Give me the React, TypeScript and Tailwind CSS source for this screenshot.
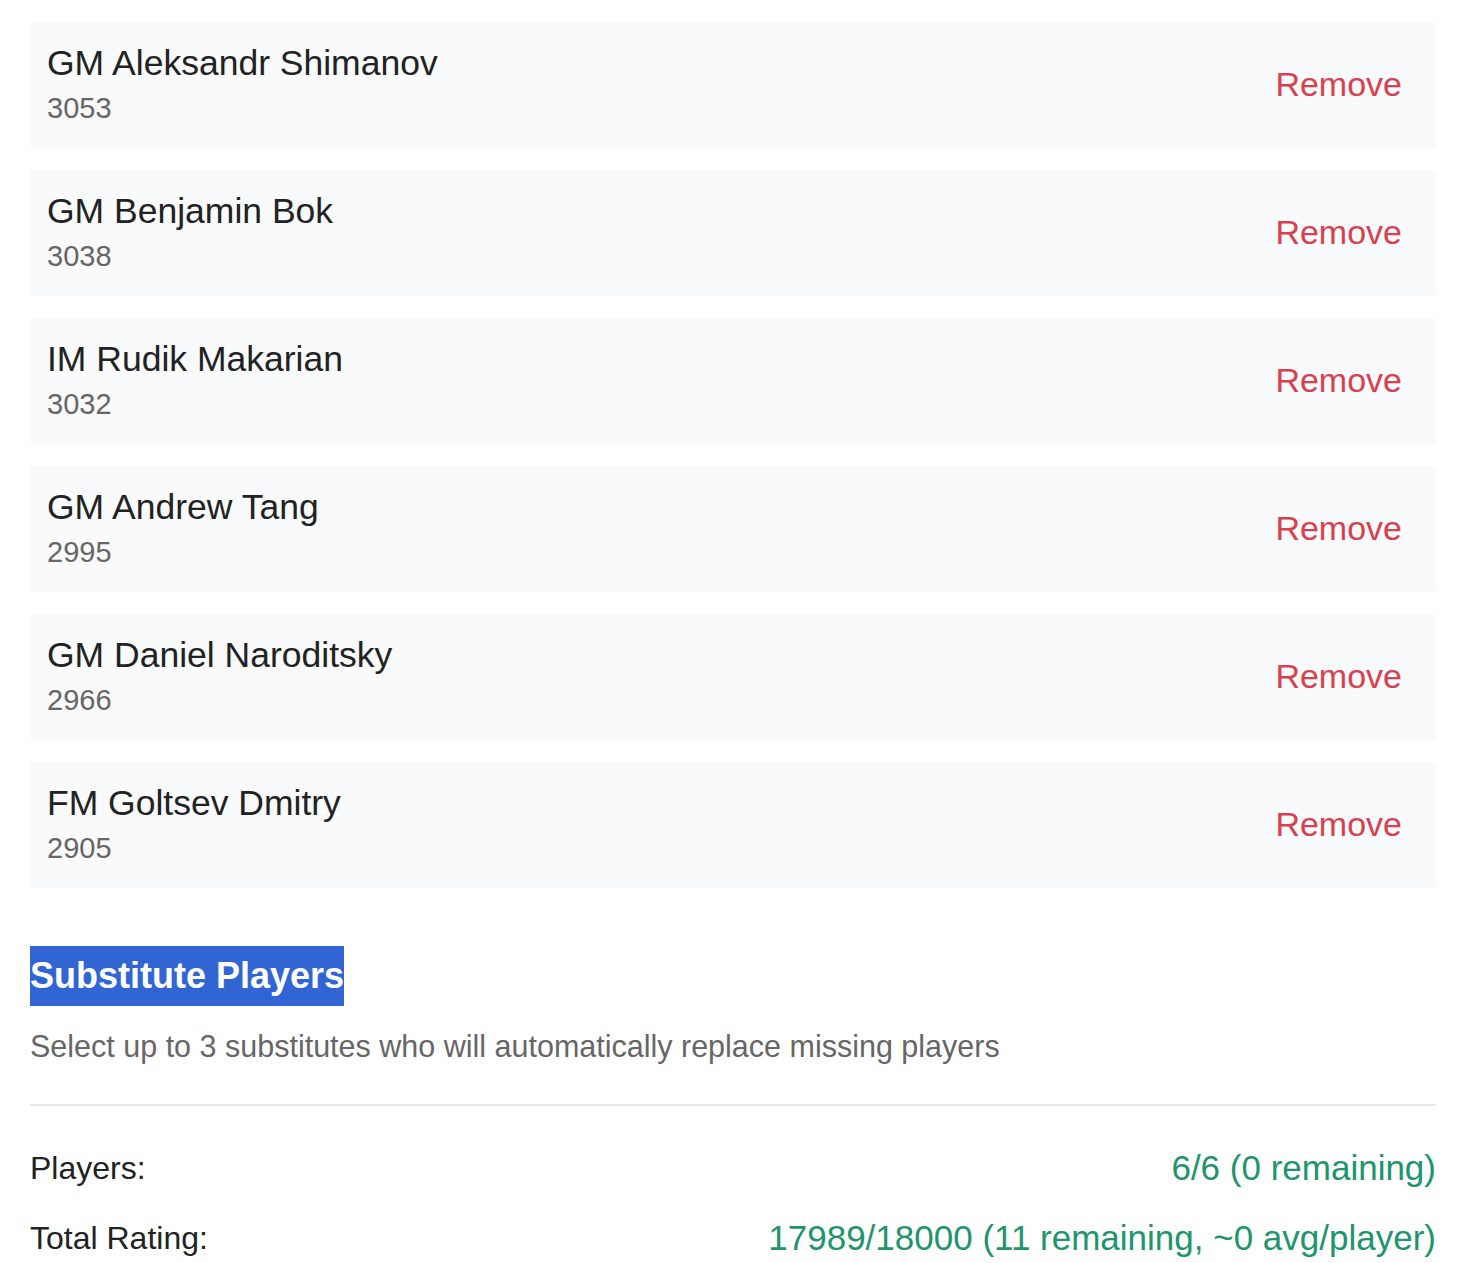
import React from "react"

const players = [
  { name: "GM Aleksandr Shimanov", rating: 3053 },
  { name: "GM Benjamin Bok", rating: 3038 },
  { name: "IM Rudik Makarian", rating: 3032 },
  { name: "GM Andrew Tang", rating: 2995 },
  { name: "GM Daniel Naroditsky", rating: 2966 },
  { name: "FM Goltsev Dmitry", rating: 2905 },
]

export default function App() {
  return (
    <div
      className="min-h-screen bg-white pl-[30px] pr-[24px] pt-[22px]"
      style={{ fontFamily: '"Liberation Sans", Arial, sans-serif' }}
    >
      <div className="flex flex-col gap-[22px]">
        {players.map((p, i) => (
          <div
            key={`player-${i}`}
            className="flex items-center justify-between bg-[#f8fafb] rounded-[4px] pl-[17px] pr-[34px] pt-[17px] pb-[19px]"
          >
            <div>
              <p className="text-[35.5px] leading-[48px] text-[#222]">{p.name}</p>
              <p className="text-[29px] leading-[42px] text-[#666]">{p.rating}</p>
            </div>
            <button className="text-[34px] leading-[48px] text-[#d9404f]">Remove</button>
          </div>
        ))}
      </div>

      <div className="mt-[58px]">
        <h3 className="text-[36px] font-bold leading-[60px]">
          <span className="inline-block h-[60px] bg-[#3165d4] text-white">Substitute Players</span>
        </h3>
        <p className="mt-[19px] text-[30.5px] leading-[42px] text-[#666]">
          Select up to 3 substitutes who will automatically replace missing players
        </p>
      </div>

      <div className="h-[2px] bg-[#e8e8e8] mt-[37px]" />

      <div className="mt-[38px] flex flex-col gap-[22px] leading-[48px]">
        <div className="flex justify-between">
          <span className="text-[32px] text-[#222]">Players:</span>
          <span className="text-[35px] text-[#21946d]">6/6 (0 remaining)</span>
        </div>
        <div className="flex justify-between">
          <span className="text-[32px] text-[#222]">Total Rating:</span>
          <span className="text-[35px] text-[#21946d]">17989/18000 (11 remaining, ~0 avg/player)</span>
        </div>
      </div>
    </div>
  )
}
